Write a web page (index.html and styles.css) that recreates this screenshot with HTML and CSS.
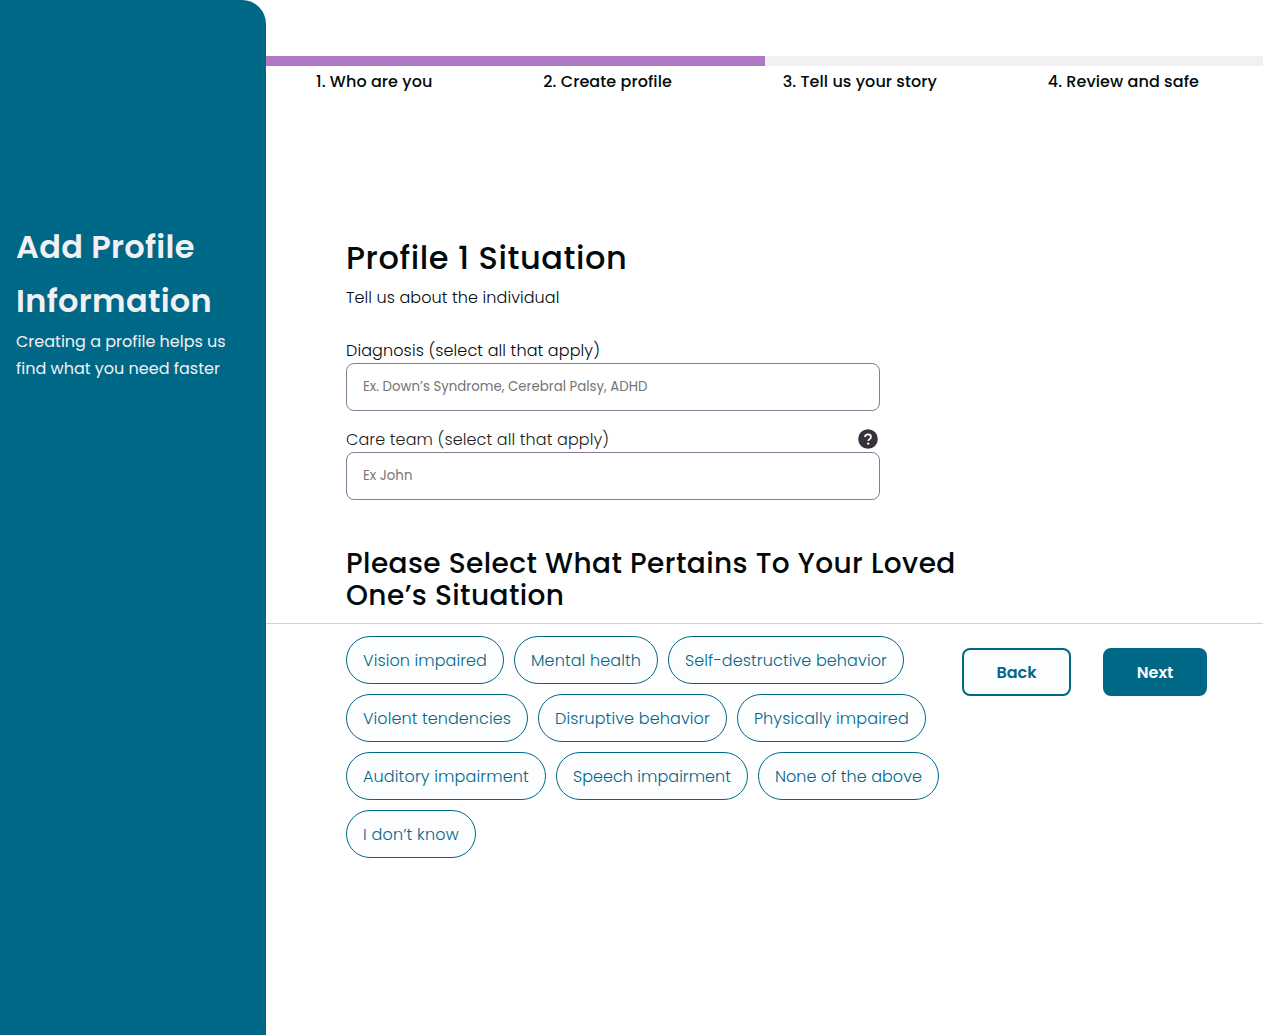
FILE: index.html
```
<!DOCTYPE html>
<html lang="en">
<head>
<meta charset="utf-8">
<title>Add Profile Information</title>
<link rel="stylesheet" href="styles.css">
</head>
<body>
<div class="page">
  <aside class="sidebar">
    <h1 class="sidebar-title">Add Profile<br>Information</h1>
    <p class="sidebar-text">Creating a profile helps us<br>find what you need faster</p>
  </aside>
  <main class="main">
    <div class="progress"><div class="progress-fill"></div></div>
    <ol class="steps">
      <li>1. Who are you</li>
      <li>2. Create profile</li>
      <li>3. Tell us your story</li>
      <li>4. Review and safe</li>
    </ol>
    <form class="form">
      <h2 class="title">Profile 1 Situation</h2>
      <p class="subtitle">Tell us about the individual</p>
      <label class="label" for="diagnosis">Diagnosis (select all that apply)</label>
      <input class="input" id="diagnosis" placeholder="Ex. Down’s Syndrome, Cerebral Palsy, ADHD">
      <label class="label label-team" for="team">Care team (select all that apply)
        <svg class="help" viewBox="0 0 20 20"><circle cx="10" cy="10" r="9.8" fill="#36313a"/><path d="M7 8.1C7 6.3 8.2 5.4 10 5.4s3 1 3 2.5c0 2.2-2.7 2.3-2.7 4.2" fill="none" stroke="#fff" stroke-width="1.7"/><circle cx="10.2" cy="14.6" r="1.2" fill="#fff"/></svg>
      </label>
      <input class="input" id="team" placeholder="Ex John">
      <h3 class="question">Please Select What Pertains To Your Loved<br>One’s Situation</h3>
      <div class="chips">
        <button type="button" class="chip chip-vision">Vision impaired</button>
        <button type="button" class="chip chip-mental">Mental health</button>
        <button type="button" class="chip chip-self">Self-destructive behavior</button>
        <button type="button" class="chip chip-violent">Violent tendencies</button>
        <button type="button" class="chip chip-disruptive">Disruptive behavior</button>
        <button type="button" class="chip chip-physical">Physically impaired</button>
        <button type="button" class="chip chip-auditory">Auditory impairment</button>
        <button type="button" class="chip chip-speech">Speech impairment</button>
        <button type="button" class="chip chip-none">None of the above</button>
        <button type="button" class="chip chip-unknown">I don’t know</button>
      </div>
    </form>
    <footer class="actions">
      <button class="btn btn-back">Back</button>
      <button class="btn btn-next">Next</button>
    </footer>
  </main>
</div>
</body>
</html>
```
FILE: styles.css
```
* { box-sizing: border-box; }
body { margin: 0; background: #fff; color: #020a0d; font: 300 16px/27px Poppins, Inter, sans-serif; }
h1, h2, h3, p, ol { margin: 0; padding: 0; font-weight: 500; }
button, input { font: inherit; }
.page { display: flex; width: 1263px; height: 1035px; }
.sidebar { flex: 0 0 266px; padding: 220px 16px 0; background: #006887; color: #f3f0f4; border-radius: 0 24px 0 0; white-space: nowrap; }
.sidebar-title { font-size: 32px; line-height: 54px; font-weight: 600; letter-spacing: 0.32px; }
.sidebar-text { font-weight: 400; }
.main { position: relative; flex: 1; padding-top: 56px; }
.progress { height: 10px; background: #f2f0f3; }
.progress-fill { width: 499px; height: 10px; background: #ae78c2; }
.steps { display: flex; justify-content: space-between; padding: 2px 64px 0 50px; list-style: none; letter-spacing: 0.08px; }
.form { position: relative; z-index: 1; width: 614px; margin: 143px 0 0 80px; white-space: nowrap; }
.title { font-size: 32px; line-height: 40px; letter-spacing: 0.57px; }
.subtitle { padding-top: 6px; font-weight: 300; letter-spacing: 0.09px; }
.label { display: flex; justify-content: space-between; align-items: center; width: 534px; height: 26px; margin-top: 26px; letter-spacing: 0.11px; }
.label-team { margin-top: 15px; padding-right: 2px; color: #1c1d20; }
.help { width: 20px; height: 20px; }
.input { display: block; width: 534px; height: 48px; padding: 0 16px 1px; border: 1px solid #8c7a93; border-radius: 8px; background: #fff; font-size: 13.33px; font-weight: 400; }
.input::placeholder { color: #757575; opacity: 1; }
.question { margin-top: 48px; font-size: 28px; line-height: 32px; letter-spacing: 0.42px; }
.chips { display: flex; flex-wrap: wrap; gap: 10px; margin-top: 24px; }
.chip { height: 48px; padding: 0 16px; border: 1px solid #006887; border-radius: 24px; background: #fcfdff; color: #006887; }
.chip-vision { letter-spacing: 0.09px; }
.chip-mental { letter-spacing: 0.115px; }
.chip-self { letter-spacing: 0.11px; }
.chip-violent { letter-spacing: 0.08px; }
.chip-disruptive { letter-spacing: 0.13px; }
.chip-physical { letter-spacing: 0.126px; }
.chip-auditory { letter-spacing: 0.15px; }
.chip-speech { letter-spacing: 0.035px; }
.chip-none { letter-spacing: 0.04px; }
.chip-unknown { letter-spacing: 0.2px; }
.actions { position: absolute; top: 623px; left: 0; right: 0; display: flex; justify-content: flex-end; gap: 32px; padding: 24px 56px 0 0; border-top: 1px solid #d0d2d4; }
.btn { height: 48px; border: 2px solid #006887; border-radius: 8px; font-weight: 600; background: #fcfdff; color: #006887; }
.btn-back { width: 109px; }
.btn-next { width: 104px; background: #006887; color: #fcfdff; }
```
